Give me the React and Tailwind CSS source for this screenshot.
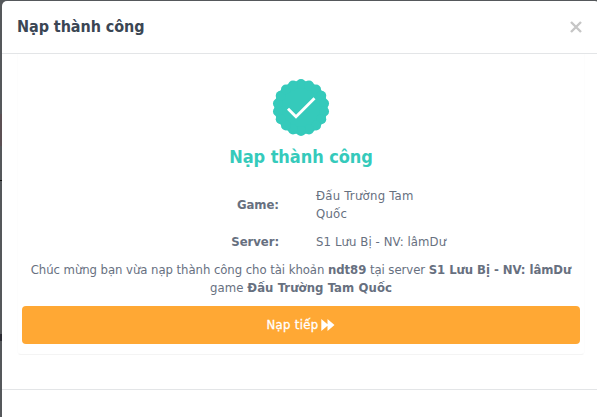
export default function App() {
  const scallops = Array.from({ length: 18 }, (_, i) => ((i * 20) * Math.PI) / 180);
  return (
    <div className="flex h-[417px] w-[597px] overflow-hidden bg-[#55585b] pt-px font-['DejaVu_Sans_Condensed','DejaVu_Sans',sans-serif] [font-stretch:condensed] text-[13px] leading-[18px] tracking-[-0.06px] text-[#67707f]">
      <div className="flex w-[2px] shrink-0 flex-col pt-[113px]">
        <div className="h-[32px] bg-[#5c5053]" />
        <div className="mt-[34px] h-px bg-[#111111]" />
        <div className="mt-[153px] h-[7px] bg-[#2b2c33]" />
      </div>
      <div className="flex w-[598px] shrink-0 flex-col rounded-t-[5px] bg-white">
        <header className="flex h-[53px] shrink-0 items-center justify-between border-b border-[#e3e5e7] pl-[15px] pr-[18px]">
          <h1 className="text-[16px] font-bold text-[#3b4654]">Nạp thành công</h1>
          <svg className="h-[12px] w-[12px]" viewBox="0 0 12 12" stroke="#c6c6c6" strokeWidth="2.4"><path d="M1 1 11 11M11 1 1 11" /></svg>
        </header>
        <main className="ml-[15px] flex h-[301px] w-[568px] shrink-0 flex-col items-center rounded-b-[4px] border-x border-b border-x-[#fdfdfd] border-b-[#f4f4f4] px-1 pt-[24px]">
          <svg className="h-[58px] w-[58px] shrink-0" viewBox="-29 -29.5 58 58" fill="#35cabb">
            <circle r="26.7" />
            {scallops.map((a) => <circle key={a} cx={Math.sin(a) * 23.4} cy={-Math.cos(a) * 23.4} r="5" />)}
            <path d="M-13 1.2-5 9.2 13.5-9.3" fill="none" stroke="white" strokeWidth="2.9" />
          </svg>
          <h2 className="mt-[9px] text-[18px] font-bold leading-[24px] text-[#35cabb]">Nạp thành công</h2>
          <dl className="mt-[18px] grid w-full grid-cols-[257px_130px] gap-x-[37px] gap-y-[10px]">
            <dt className="self-center text-right font-bold">Game:</dt>
            <dd className="w-[110px] tracking-[0.25px]">Đấu Trường Tam Quốc</dd>
            <dt className="text-right font-bold">Server:</dt>
            <dd className="whitespace-nowrap tracking-[0.1px]">S1 Lưu Bị - NV: lâmDư</dd>
          </dl>
          <p className="mt-[10px] whitespace-nowrap text-center">
            Chúc mừng bạn vừa nạp thành công cho tài khoản <b>ndt89</b> tại server <b>S1 Lưu Bị - NV: lâmDư</b><br />
            <span className="tracking-[0.08px]">game <b>Đấu Trường Tam Quốc</b></span>
          </p>
          <button className="mt-[9px] flex h-[38px] w-[558px] shrink-0 items-center justify-center gap-[3px] rounded-[4px] bg-[#ffa834] text-[13px] tracking-[0.3px] text-white [-webkit-text-stroke:0.3px_white]">
            <span>Nạp tiếp</span>
            <svg className="h-[12px] w-[14px]" viewBox="0 0 14 12" fill="white"><path d="M0.3 0 6.5 5.2V0L13.5 6 6.5 12V6.8L0.3 12Z" /></svg>
          </button>
        </main>
        <footer className="mt-[34px] h-[28px] shrink-0 border-t border-[#e3e5e7]" />
      </div>
    </div>
  );
}
